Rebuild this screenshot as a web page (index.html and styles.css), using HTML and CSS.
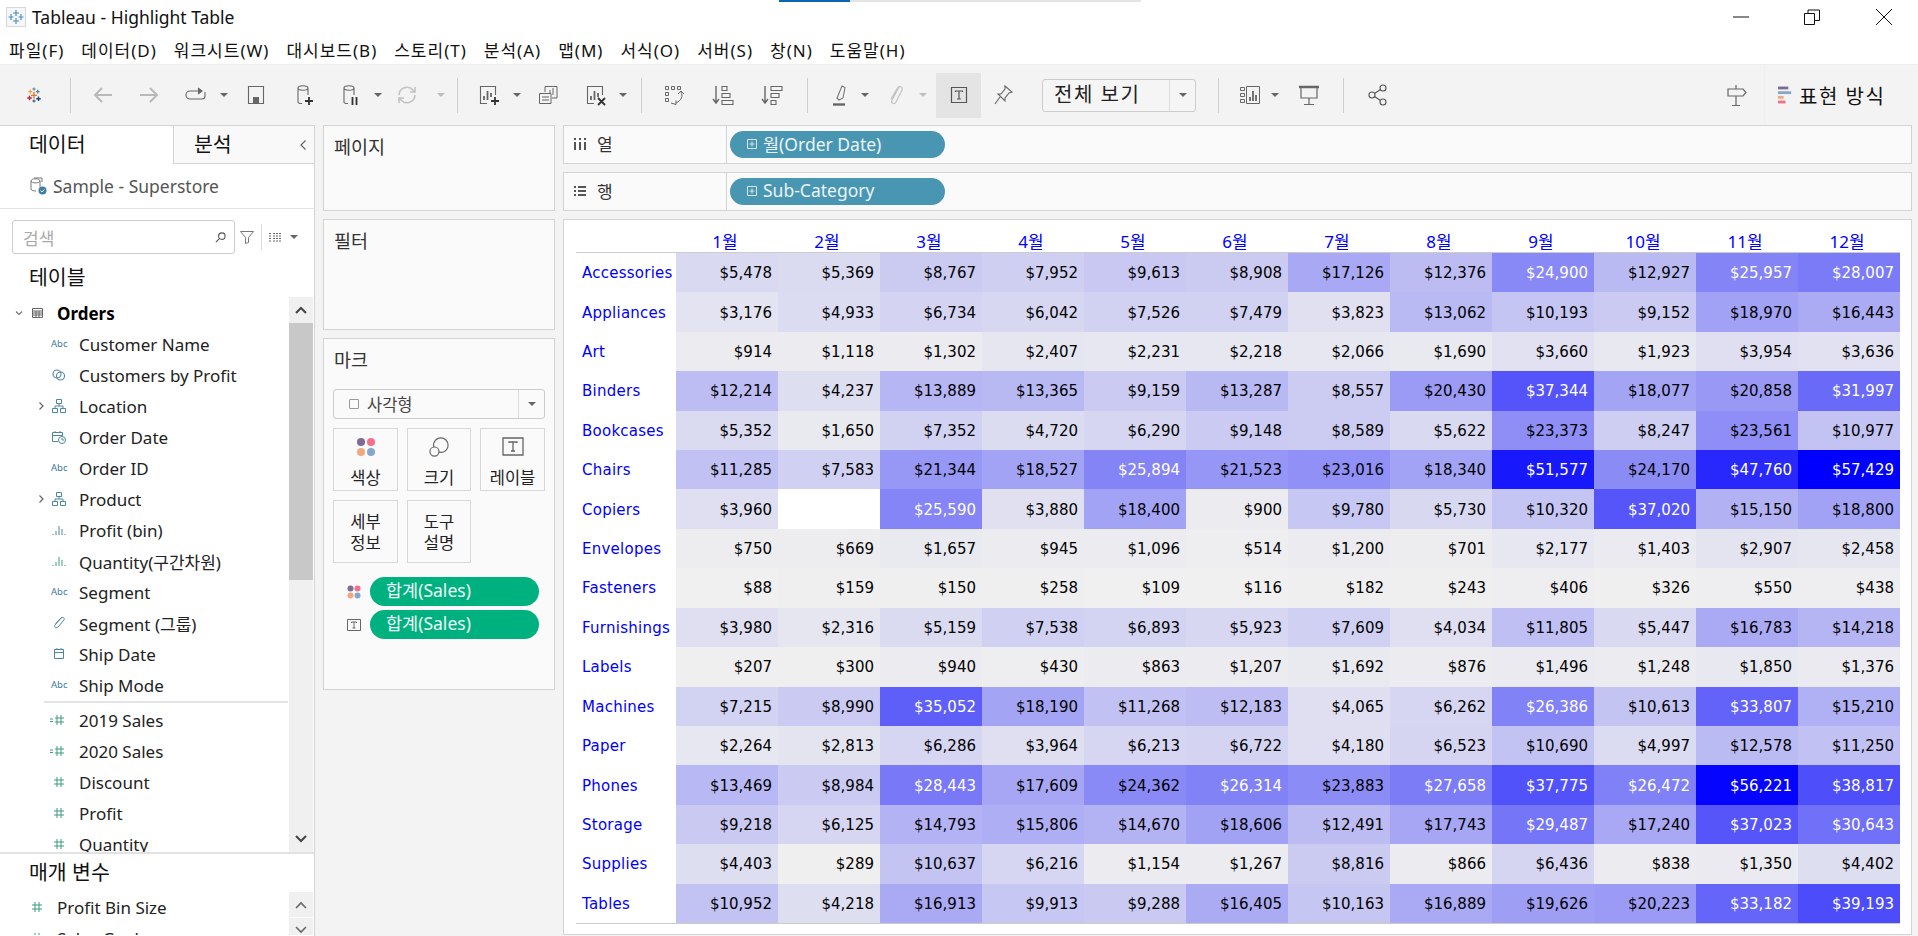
FILE: index.html
```html
<!DOCTYPE html>
<html lang="ko">
<head>
<meta charset="utf-8">
<title>Tableau - Highlight Table</title>
<link rel="stylesheet" href="styles.css">
</head>
<body>
<div class="app">
  <div class="progress"><span class="progress-fill"></span></div>
  <header class="titlebar">
    <svg class="app-icon" viewBox="0 0 20 20"><rect x=".5" y=".5" width="19" height="19" fill="#f4f7fa" stroke="#d8d8d8"/><path d="M10 3v6M7 6h6M10 11v6M7 14h6M5 7v6M2.500 10h5M15 7v6M12.500 10h5" stroke="#4d8fc0" stroke-width="1.200" fill="none"/></svg>
    <span class="app-title">Tableau - Highlight Table</span>
    <div class="window-controls">
      <svg class="win-min" viewBox="0 0 16 16"><path d="M0 8h16" stroke="#111" fill="none"/></svg>
      <svg class="win-max" viewBox="0 0 16 16"><path d="M.5 4.500h10v11H.5zM4 4.500V1h11.500v10.500H11" stroke="#111" fill="none"/></svg>
      <svg class="win-close" viewBox="0 0 16 16"><path d="M0 0l16 16M16 0L0 16" stroke="#111" fill="none"/></svg>
    </div>
  </header>
  <nav class="menubar">
    <span>파일(F)</span><span>데이터(D)</span><span>워크시트(W)</span><span>대시보드(B)</span><span>스토리(T)</span><span>분석(A)</span><span>맵(M)</span><span>서식(O)</span><span>서버(S)</span><span>창(N)</span><span>도움말(H)</span>
  </nav>
  <div class="toolbar">
    <svg class="ti ti-logo ml25" viewBox="0 0 24 24" fill="none" stroke-width="1.800"><path d="M12 8v9M8 12.500h8" stroke="#e8762b"/><path d="M6 13v6M3 16h6" stroke="#c72035"/><path d="M18 14v6M15 17h6" stroke="#1f447e"/><path d="M7 5v5M4.500 7.500h5" stroke="#f0a03c"/><path d="M17 5v5M14.500 7.500h5" stroke="#5b879b"/><path d="M12 2v4M10 4h4" stroke="#7099a6"/><path d="M12 18v4M10 20h4" stroke="#5b6591"/></svg>
    <i class="sep ml27"></i>
    <svg class="ti ml20" viewBox="0 0 24 24" fill="none" stroke="#b9b9b9" stroke-width="2"><path d="M21 12H4M11 5l-7 7 7 7"/></svg>
    <svg class="ti ml22" viewBox="0 0 24 24" fill="none" stroke="#b9b9b9" stroke-width="2"><path d="M3 12h17M13 5l7 7-7 7"/></svg>
    <svg class="ti ml23" viewBox="0 0 24 24" fill="none" stroke="#666" stroke-width="1.100"><path d="M14 8H6a3.500 3.500 0 0 0 0 8h12a3 3 0 0 0 3-3V9"/><path d="M14 5l4 3-4 3" fill="#666"/></svg>
    <i class="caret ml12"></i>
    <svg class="ti ml15" viewBox="0 0 24 24" fill="none" stroke="#666" stroke-width="1.100"><path d="M4.500 3.500h15v17h-15z"/><rect x="9" y="14" width="6" height="6" fill="#666" stroke="none"/></svg>
    <svg class="ti ml24" viewBox="0 0 24 24" fill="none" stroke="#666" stroke-width="1.100"><path d="M6 5c0-3 10-3 10 0v7M6 5c0 3 10 3 10 0M6 5v14c0 1 2 1.500 4 1.500"/><path d="M17 14v8M13 18h8" stroke="#333" stroke-width="1.800"/></svg>
    <svg class="ti ml22" viewBox="0 0 24 24" fill="none" stroke="#666" stroke-width="1.100"><path d="M6 5c0-3 10-3 10 0v7M6 5c0 3 10 3 10 0M6 5v14c0 1 2 1.500 4 1.500"/><path d="M14.500 14v8M18.500 14v8" stroke="#333" stroke-width="1.800"/></svg>
    <i class="caret ml12"></i>
    <svg class="ti ml12" viewBox="0 0 24 24" fill="none" stroke="#c2c2c2" stroke-width="1.600"><path d="M4 12a8 8 0 0 1 14-5l2 2M20 12a8 8 0 0 1-14 5l-2-2"/><path d="M20 4v5h-5M4 20v-5h5"/></svg>
    <i class="caret caret-off ml18"></i>
    <i class="sep ml11"></i>
    <svg class="ti ml19" viewBox="0 0 24 24" fill="none" stroke="#666" stroke-width="1.100"><path d="M10 20.500H3.500v-17h15V12"/><path d="M7 17v-4M10.500 17V8M14 14V10" stroke-width="1.800"/><path d="M18 14v8M14 18h8" stroke="#333" stroke-width="1.800"/></svg>
    <i class="caret ml12"></i>
    <svg class="ti ml14" viewBox="0 0 24 24" fill="none" stroke="#666" stroke-width="1"><path d="M9 9V3.500h12V15h-5"/><path d="M3.500 10.500H15v10H3.500z" fill="#f3f3f3"/><path d="M14 11V7M17 12V5M6 17h7M6 14h7"/></svg>
    <svg class="ti ml24" viewBox="0 0 24 24" fill="none" stroke="#666" stroke-width="1.100"><path d="M10 20.500H3.500v-17h15V12"/><path d="M7 17v-4M10.500 17V8M14 14V10" stroke-width="1.800"/><path d="M14 15l7 7M21 15l-7 7" stroke="#333" stroke-width="1.800"/></svg>
    <i class="caret ml11"></i>
    <i class="sep ml13"></i>
    <svg class="ti ml20" viewBox="0 0 24 24" fill="none" stroke="#666" stroke-width="1"><path d="M3.500 3.500h3v3h-3zM9.500 3.500h3v3h-3zM15.500 3.500h3v3h-3zM3.500 9.500h3v3h-3zM3.500 15.500h3v3h-3z"/><path d="M19 9c2 4 1 8-5 11M9 20l5 1.500 0-4M16 11l3-3 3 3"/></svg>
    <svg class="ti ml25" viewBox="0 0 24 24" fill="none" stroke="#666" stroke-width="1.100"><path d="M5 3v17M2 16l3 4 3-4" stroke-width="1.400"/><path d="M11 3.500h5v4h-5zM11 10.500h8v4h-8zM11 17.500h11v4H11z"/></svg>
    <svg class="ti ml25" viewBox="0 0 24 24" fill="none" stroke="#666" stroke-width="1.100"><path d="M5 3v17M2 16l3 4 3-4" stroke-width="1.400"/><path d="M11 3.500h11v4H11zM11 10.500h8v4h-8zM11 17.500h5v4h-5z"/></svg>
    <i class="sep ml23"></i>
    <svg class="ti ml20" viewBox="0 0 24 24" fill="none" stroke="#777" stroke-width="1.100"><path d="M9 15L14 3l3 1.500-2 10.500-4 2z"/><path d="M5 21.500h12" stroke="#666" stroke-width="2.400"/></svg>
    <i class="caret ml9"></i>
    <svg class="ti ml13" viewBox="0 0 24 24" fill="none" stroke="#c4c4c4" stroke-width="1.300"><path d="M16 4L9 17c-1.500 3 2.500 5 4 2l6-12c1-3-3-5-4.500-2L8 16"/></svg>
    <i class="caret caret-off ml12"></i>
    <div class="tool-active ml8"><svg class="ti" viewBox="0 0 24 24" fill="none" stroke="#555" stroke-width="1.200"><path d="M4.500 4.500h15v15h-15z"/><path d="M8.500 9V8h7v1M12 8v8M10 16h4"/></svg></div>
    <svg class="ti ml10" viewBox="0 0 24 24" fill="none" stroke="#666" stroke-width="1.100"><path d="M14 3l7 6-3 1-4 5 0 3-7-7 3 0 4-5zM9 14l-5 7"/></svg>
    <div class="fit-select ml27"><span class="fit-text">전체 보기</span><span class="fit-btn"><i class="caret"></i></span></div>
    <i class="sep ml22"></i>
    <svg class="ti ml19" viewBox="0 0 24 24" fill="none" stroke="#666" stroke-width="1"><path d="M2.500 4.500h4v3h-4zM2.500 10.500h4v3h-4zM2.500 16.500h4v3h-4zM8.500 3.500h13v17h-13z"/><path d="M12 18v-4M15 18V8M18 18v-6" stroke-width="1.800"/></svg>
    <i class="caret ml9"></i>
    <svg class="ti ml17" viewBox="0 0 24 24" fill="none" stroke="#666" stroke-width="1.200"><path d="M2 4h20" stroke-width="2.500"/><path d="M4 5v10h16V5M12 15v6M7 21.500h10"/></svg>
    <i class="sep ml22"></i>
    <svg class="ti ml22" viewBox="0 0 24 24" fill="none" stroke="#555" stroke-width="1.100"><circle cx="6" cy="12" r="3"/><circle cx="17" cy="5" r="3"/><circle cx="17" cy="19" r="3"/><path d="M8.500 10.500l6-4M8.500 13.500l6 4"/></svg>
    <svg class="ti ml-auto" viewBox="0 0 24 24" fill="none" stroke="#666" stroke-width="1.200"><path d="M3 6h15l3 3.500L18 13H3zM11 2v4M11 13v10M7 22.500h8"/></svg>
    <div class="showme">
      <svg class="showme-icon" viewBox="0 0 16 18"><rect y="0" width="11" height="3" fill="#7f6a94"/><rect y="5" width="14" height="3" fill="#86a7cd"/><rect y="10" width="6" height="3" fill="#f4a77e"/><rect y="15" width="8" height="3" fill="#f4708a"/></svg>
      <span>표현 방식</span>
    </div>
  </div>
  <main class="workspace">
    <aside class="data-pane">
      <div class="tabs">
        <div class="tab tab-on">데이터</div>
        <div class="tab tab-off">분석<svg class="tab-chev" viewBox="0 0 8 12" fill="none" stroke="#666" stroke-width="1.200"><path d="M6.500 1.500L2 6l4.500 4.500"/></svg></div>
      </div>
      <div class="source">
        <svg class="source-icon" viewBox="0 0 18 18" fill="none" stroke="#777"><path d="M2 4c0-3 9-3 9 0v6M2 4c0 2.500 9 2.500 9 0M2 4v8c0 1.500 3 2 5 2M5 1h8v4"/><circle cx="13.500" cy="13.500" r="4" fill="#3b7ea8" stroke="none"/><path d="M11.500 13.500l1.500 1.500 2.500-2.500" stroke="#fff"/></svg>
        <span>Sample - Superstore</span>
      </div>
      <div class="search-row">
        <div class="search"><span class="search-ph">검색</span>
          <svg class="search-mag" viewBox="0 0 12 12" fill="none" stroke="#555" stroke-width="1.200"><circle cx="7.500" cy="4.500" r="3.500"/><path d="M5 7L1 11"/></svg>
        </div>
        <svg class="funnel" viewBox="0 0 14 14" fill="none" stroke="#777"><path d="M.5 1.500h13L8.500 7.500v5l-3 1v-6z"/></svg>
        <i class="sep sep-short"></i>
        <svg class="listview" viewBox="0 0 13 10" fill="none" stroke="#666"><path d="M0 1.500h3M4 1.500h9M0 4h3M4 4h9M0 6.500h3M4 6.500h9M0 9h3M4 9h9" stroke-dasharray="2 1"/></svg>
        <i class="caret ml8"></i>
      </div>
      <div class="section-head">테이블</div>
      <div class="fields-wrap">
        <div class="fields">
          <div class="row row-table">
            <svg class="row-chev" viewBox="0 0 10 10" fill="none" stroke="#777" stroke-width="1.200"><path d="M2 3.500l3 3 3-3"/></svg>
            <svg class="row-tbl" viewBox="0 0 11 10" fill="none" stroke="#666"><path d="M.5.500h10v9H.5zM.5 3h10M.5 5h10M.5 7h10M4 3v6.500M7 3v6.500"/></svg>
            <b>Orders</b>
          </div>
          <div class="row"><span class="fi abc">Abc</span>Customer Name</div>
          <div class="row"><svg class="fi" viewBox="0 0 14 14" fill="none" stroke="#4d86a0" stroke-width="1.100"><circle cx="5" cy="6" r="4"/><circle cx="8.500" cy="8" r="4"/></svg>Customers by Profit</div>
          <div class="row"><svg class="exp" viewBox="0 0 6 10" fill="none" stroke="#666" stroke-width="1.200"><path d="M1.500 1.500L5 5 1.500 8.500"/></svg><svg class="fi" viewBox="0 0 14 14" fill="none" stroke="#4d86a0"><path d="M4.500.500h5v4h-5zM.500 9.500h5v4h-5zM8.500 9.500h5v4h-5zM7 4.500V7H3v2.500M7 7h4v2.500"/></svg>Location</div>
          <div class="row"><svg class="fi" viewBox="0 0 14 14" fill="none" stroke="#4d86a0"><path d="M6 11.500H.5v-9h10V6M.5 5.500h10M3 1v2M8 1v2"/><circle cx="10" cy="10" r="3.500"/><path d="M10 8v2h2"/></svg>Order Date</div>
          <div class="row"><span class="fi abc">Abc</span>Order ID</div>
          <div class="row"><svg class="exp" viewBox="0 0 6 10" fill="none" stroke="#666" stroke-width="1.200"><path d="M1.500 1.500L5 5 1.500 8.500"/></svg><svg class="fi" viewBox="0 0 14 14" fill="none" stroke="#4d86a0"><path d="M4.500.500h5v4h-5zM.500 9.500h5v4h-5zM8.500 9.500h5v4h-5zM7 4.500V7H3v2.500M7 7h4v2.500"/></svg>Product</div>
          <div class="row"><svg class="fi" viewBox="0 0 14 14" fill="none" stroke="#4d86a0"><path d="M1 12v-1M4 12V8M7 12V3M10 12V6M13 12v-1"/></svg>Profit (bin)</div>
          <div class="row"><svg class="fi" viewBox="0 0 14 14" fill="none" stroke="#3b9c80"><path d="M1 12v-1M4 12V8M7 12V3M10 12V6M13 12v-1"/></svg>Quantity(구간차원)</div>
          <div class="row"><span class="fi abc">Abc</span>Segment</div>
          <div class="row"><svg class="fi" viewBox="0 0 14 14" fill="none" stroke="#4d86a0"><path d="M10 1L3 9c-1.500 2 1 4 3 2l6-7c1-2-1-3.500-3-2L3.500 8"/></svg>Segment (그룹)</div>
          <div class="row"><svg class="fi" viewBox="0 0 14 14" fill="none" stroke="#4d86a0"><path d="M2.500 2.500h9v9h-9zM2.500 5.500h9M5 1v2M9 1v2"/></svg>Ship Date</div>
          <div class="row"><span class="fi abc">Abc</span>Ship Mode</div>
          <div class="divider"></div>
          <div class="row"><svg class="fi fi-wide" viewBox="0 0 16 14" fill="none" stroke="#3b9c80"><path d="M0 6h3M0 8.500h3M7 2v10M11 2v10M5 5h9M5 9h9"/></svg>2019 Sales</div>
          <div class="row"><svg class="fi fi-wide" viewBox="0 0 16 14" fill="none" stroke="#3b9c80"><path d="M0 6h3M0 8.500h3M7 2v10M11 2v10M5 5h9M5 9h9"/></svg>2020 Sales</div>
          <div class="row"><svg class="fi" viewBox="0 0 14 14" fill="none" stroke="#3b9c80"><path d="M5 2v10M9 2v10M2 5h10M2 9h10"/></svg>Discount</div>
          <div class="row"><svg class="fi" viewBox="0 0 14 14" fill="none" stroke="#3b9c80"><path d="M5 2v10M9 2v10M2 5h10M2 9h10"/></svg>Profit</div>
          <div class="row"><svg class="fi" viewBox="0 0 14 14" fill="none" stroke="#3b9c80"><path d="M5 2v10M9 2v10M2 5h10M2 9h10"/></svg>Quantity</div>
        </div>
        <div class="scrollbar">
          <div class="sb-btn"><svg viewBox="0 0 12 8" fill="none" stroke="#444" stroke-width="2"><path d="M1 7l5-5 5 5"/></svg></div>
          <div class="sb-thumb"></div>
          <div class="sb-track"></div>
          <div class="sb-btn sb-down"><svg viewBox="0 0 12 8" fill="none" stroke="#444" stroke-width="2"><path d="M1 1l5 5 5-5"/></svg></div>
        </div>
      </div>
      <div class="params">
        <div class="section-head param-head">매개 변수</div>
        <div class="params-body">
          <div class="params-list">
            <div class="row row-param"><svg class="fi" viewBox="0 0 14 14" fill="none" stroke="#3b9c80"><path d="M5 2v10M9 2v10M2 5h10M2 9h10"/></svg>Profit Bin Size</div>
            <div class="row row-param"><svg class="fi" viewBox="0 0 14 14" fill="none" stroke="#3b9c80"><path d="M5 2v10M9 2v10M2 5h10M2 9h10"/></svg>Sales Goal</div>
          </div>
          <div class="scrollbar sb-small">
            <div class="sb-btn"><svg viewBox="0 0 12 8" fill="none" stroke="#666" stroke-width="1.600"><path d="M1 7l5-5 5 5"/></svg></div>
            <div class="sb-btn sb-sep"><svg viewBox="0 0 12 8" fill="none" stroke="#666" stroke-width="1.600"><path d="M1 1l5 5 5-5"/></svg></div>
          </div>
        </div>
      </div>
    </aside>
    <section class="cards">
      <div class="card card-pages"><div class="card-title">페이지</div></div>
      <div class="card card-filters"><div class="card-title">필터</div></div>
      <div class="card card-marks">
        <div class="card-title">마크</div>
        <div class="mark-select"><span class="mark-sel-label"><i class="square"></i>사각형</span><span class="mark-sel-btn"><i class="caret"></i></span></div>
        <div class="mark-grid">
          <div class="mark-btn">
            <svg class="mark-ic" viewBox="0 0 20 20"><circle cx="5" cy="5" r="4" fill="#7f6a94"/><circle cx="15" cy="5" r="4" fill="#f4708a"/><circle cx="5" cy="15" r="4" fill="#f4a77e"/><circle cx="15" cy="15" r="4" fill="#86a7cd"/></svg>
            <span>색상</span></div>
          <div class="mark-btn">
            <svg class="mark-ic" viewBox="0 0 22 22" fill="none" stroke="#666" stroke-width="1.300"><circle cx="13" cy="9" r="8"/><circle cx="6" cy="16" r="5" fill="#fafafa"/></svg>
            <span>크기</span></div>
          <div class="mark-btn">
            <svg class="mark-ic" viewBox="0 0 22 20" fill="none" stroke="#666" stroke-width="1.300"><path d="M1 1h20v17H1z"/><path d="M7 6V5h8v1M11 5v9M9 14h4"/></svg>
            <span>레이블</span></div>
          <div class="mark-btn mark-two"><span>세부<br>정보</span></div>
          <div class="mark-btn mark-two"><span>도구<br>설명</span></div>
        </div>
        <div class="mark-pills">
          <div class="mark-pill-row">
            <svg class="pill-ic" viewBox="0 0 14 14"><circle cx="3.500" cy="3.500" r="3" fill="#7f6a94"/><circle cx="10.500" cy="3.500" r="3" fill="#f4708a"/><circle cx="3.500" cy="10.500" r="3" fill="#f4a77e"/><circle cx="10.500" cy="10.500" r="3" fill="#86a7cd"/></svg>
            <div class="pill-green">합계(Sales)</div>
          </div>
          <div class="mark-pill-row">
            <svg class="pill-ic" viewBox="0 0 14 14" fill="none" stroke="#666"><path d="M.5 1.500h13v11H.5z"/><path d="M4.500 5V4h5v1M7 4v6M5.500 10h3"/></svg>
            <div class="pill-green">합계(Sales)</div>
          </div>
        </div>
      </div>
    </section>
    <section class="viewarea">
      <div class="shelf">
        <div class="shelf-label"><svg class="shelf-ic" viewBox="0 0 12 12" fill="#555"><path d="M0 4h2v8H0zM5 4h2v8H5zM10 4h2v8h-2zM0 0h2v2H0zM5 0h2v2H5zM10 0h2v2h-2z"/></svg>열</div>
        <div class="shelf-body"><div class="pill-blue"><svg class="pill-plus" viewBox="0 0 10 10" fill="none" stroke="#d5e6ee"><path d="M.5.500h9v9h-9zM5 2.500v5M2.500 5h5"/></svg>월(Order Date)</div></div>
      </div>
      <div class="shelf">
        <div class="shelf-label"><svg class="shelf-ic" viewBox="0 0 12 12" fill="#555"><path d="M0 1h2v2H0zM4 1h8v2H4zM0 5h2v2H0zM4 5h8v2H4zM0 9h2v2H0zM4 9h8v2H4z"/></svg>행</div>
        <div class="shelf-body"><div class="pill-blue"><svg class="pill-plus" viewBox="0 0 10 10" fill="none" stroke="#d5e6ee"><path d="M.5.500h9v9h-9zM5 2.500v5M2.500 5h5"/></svg>Sub-Category</div></div>
      </div>
      <div class="viz">
        <div class="heat" id="heat"></div>
      </div>
    </section>
  </main>
</div>
<script src="script.js"></script>
</body>
</html>
```
FILE: styles.css
```css
* { box-sizing: border-box; }
html, body { margin: 0; height: 100%; overflow: hidden; background: #fff; }
body { font-family: "Noto Sans", "Noto Sans CJK KR", sans-serif; color: #222; }
i { display: block; }
.app { width: 1918px; height: 936px; display: flex; flex-direction: column; position: relative; }
.progress { position: absolute; left: 779px; top: 0; width: 362px; height: 2px; background: #e4e4e4; }
.progress-fill { display: block; width: 71px; height: 2px; background: #0a66b0; }

.titlebar { height: 34px; display: flex; align-items: center; padding-left: 6px; background: #fff; flex: none; }
.app-icon { width: 20px; height: 20px; margin-right: 6px; }
.app-title { font-size: 17.500px; color: #111; }
.window-controls { margin-left: auto; display: flex; align-items: center; padding-right: 26px; }
.window-controls svg { width: 16px; height: 16px; display: block; }
.win-max { margin-left: 55px; }
.win-close { margin-left: 56px; }

.menubar { height: 30px; display: flex; align-items: center; gap: 17px; padding-left: 9px; font-size: 17px; letter-spacing: 1px; color: #111; flex: none; background: #fff; }

.toolbar { height: 61px; background: #f3f3f3; display: flex; align-items: center; flex: none; border-top: 1px solid #eee; }
.ti { width: 24px; height: 24px; flex: none; display: block; }
.ti-logo { width: 18px; height: 18px; }
.sep { width: 1px; height: 35px; background: #cfcfcf; flex: none; }
.caret { width: 0; height: 0; border: 4px solid transparent; border-top: 4px solid #666; border-bottom: 0; flex: none; margin-left: 1px; margin-right: 1px; }
.caret-off { border-top-color: #bdbdbd; }
.ml8 { margin-left: 8px; } .ml9 { margin-left: 9px; } .ml10 { margin-left: 10px; } .ml11 { margin-left: 11px; }
.ml12 { margin-left: 12px; } .ml13 { margin-left: 13px; } .ml14 { margin-left: 14px; } .ml15 { margin-left: 15px; }
.ml17 { margin-left: 17px; } .ml18 { margin-left: 18px; } .ml19 { margin-left: 19px; } .ml20 { margin-left: 20px; }
.ml22 { margin-left: 22px; } .ml23 { margin-left: 23px; } .ml24 { margin-left: 24px; } .ml25 { margin-left: 25px; }
.ml27 { margin-left: 27px; } .ml-auto { margin-left: auto; }
.tool-active { width: 45px; height: 45px; background: #e4e4e4; display: flex; align-items: center; justify-content: center; flex: none; }
.fit-select { width: 154px; height: 33px; border: 1px solid #ccc; border-radius: 3px; display: flex; align-items: stretch; flex: none; background: #f5f5f5; }
.fit-text { flex: 1; font-size: 20px; letter-spacing: 1.500px; line-height: 30px; padding-left: 11px; color: #222; white-space: nowrap; }
.fit-btn { width: 26px; flex: none; border-left: 1px solid #ddd; display: flex; align-items: center; justify-content: center; }
.showme { width: 154px; align-self: stretch; margin-left: 15px; display: flex; align-items: center; padding-left: 13px; border-left: 1px solid #efefef; font-size: 20px; letter-spacing: 1.500px; color: #111; }
.showme-icon { width: 15px; height: 18px; margin-right: 6px; }

.workspace { flex: 1; min-height: 0; display: grid; grid-template-columns: 315px 232px 1349px; column-gap: 8px; background: #f3f3f3; padding-bottom: 1px; }
.data-pane { background: #fff; border-top: 1px solid #d4d4d4; border-right: 1px solid #d4d4d4; display: flex; flex-direction: column; min-height: 0; overflow: hidden; height: 811px; }
.tabs { display: flex; height: 38px; flex: none; }
.tab { font-size: 20.500px; line-height: 37px; color: #111; }
.tab-on { width: 173px; padding-left: 29px; }
.tab-off { flex: 1; padding-left: 20px; background: #f9f9f9; border-left: 1px solid #d4d4d4; border-bottom: 1px solid #d4d4d4; display: flex; align-items: center; }
.tab-chev { width: 8px; height: 12px; margin-left: auto; margin-right: 7px; }
.source { height: 45px; display: flex; align-items: center; padding-left: 29px; font-size: 17.500px; color: #555; border-bottom: 1px solid #e2e2e2; flex: none; }
.source-icon { width: 18px; height: 18px; margin-right: 6px; }
.search-row { height: 46px; display: flex; align-items: center; padding-left: 12px; padding-top: 10px; flex: none; }
.search { width: 223px; height: 34px; border: 1px solid #ccc; border-radius: 3px; display: flex; align-items: center; padding: 0 8px 0 10px; }
.search-ph { font-size: 17px; color: #aaa; }
.search-mag { width: 11px; height: 11px; margin-left: auto; }
.funnel { width: 14px; height: 14px; margin-left: 5px; }
.sep-short { height: 26px; margin-left: 7px; background: #ddd; }
.listview { width: 13px; height: 10px; margin-left: 7px; }
.section-head { font-size: 20.500px; line-height: 26px; padding-left: 29px; color: #111; height: 42px; padding-top: 9px; flex: none; }

.fields-wrap { height: 555px; display: flex; flex: none; overflow: hidden; }
.fields { width: 289px; padding-top: 1px; overflow: hidden; }
.row { height: 31px; display: flex; align-items: center; padding-left: 79px; font-size: 17px; color: #222; position: relative; white-space: nowrap; }
.row-table { padding-left: 57px; color: #000; }
.row-chev { position: absolute; left: 14px; top: 10px; width: 10px; height: 10px; }
.row-tbl { position: absolute; left: 32px; top: 10px; width: 11px; height: 10px; }
.fi { position: absolute; left: 52px; top: 8px; width: 14px; height: 14px; }
.fi-wide { left: 50px; width: 16px; }
.exp { position: absolute; left: 38px; top: 10px; width: 6px; height: 10px; }
.abc { font-size: 9.500px; line-height: 14px; color: #3c7a9b; left: 51px; width: auto; }
.divider { height: 2px; margin: 0 1px 2px 44px; background: #e4e4e4; }
.scrollbar { width: 24px; display: flex; flex-direction: column; background: #f0f0f0; flex: none; }
.sb-btn { height: 26px; display: flex; align-items: center; justify-content: center; flex: none; background: #f0f0f0; }
.sb-btn svg { width: 12px; height: 8px; display: block; }
.sb-thumb { height: 257px; background: #c8c8c8; flex: none; }
.sb-track { flex: 1; }
.params { flex: 1; min-height: 0; border-top: 2px solid #e2e2e2; overflow: hidden; }
.param-head { height: 38px; padding-top: 5px; }
.params-body { display: flex; height: 43px; overflow: hidden; }
.params-list { width: 289px; }
.row-param { padding-left: 57px; height: 31px; }
.row-param .fi { left: 30px; }
.sb-small { height: 43px; }
.sb-sep { border-top: 1px solid #fff; height: 18px; align-items: flex-start; padding-top: 8px; }
.sb-small .sb-btn:first-child { height: 25px; }

.cards { display: flex; flex-direction: column; gap: 8px; }
.card { background: #fafafa; border: 1px solid #d4d4d4; flex: none; }
.card-pages { height: 86px; }
.card-filters { height: 111px; }
.card-marks { height: 352px; }
.card-title { font-size: 18.500px; color: #333; padding: 10px 0 0 10px; line-height: 22px; }
.mark-select { margin: 18px 9px 0; height: 30px; border: 1px solid #ccc; border-radius: 3px; display: flex; align-items: stretch; }
.mark-sel-label { flex: 1; display: flex; align-items: center; padding-left: 15px; font-size: 16.500px; color: #444; }
.square { width: 10px; height: 10px; border: 1px solid #999; border-radius: 1px; margin-right: 8px; background: #fafafa; }
.mark-sel-btn { width: 26px; border-left: 1px solid #ddd; display: flex; align-items: center; justify-content: center; }
.mark-grid { display: grid; grid-template-columns: 65px 64px 65px; grid-auto-rows: 63px; column-gap: 9px; row-gap: 9px; margin: 9px 9px 0; }
.mark-btn { border: 1px solid #d8d8d8; display: flex; flex-direction: column; align-items: center; font-size: 16.500px; color: #222; padding-top: 8px; gap: 8px; }
.mark-ic { width: 22px; height: 20px; display: block; }
.mark-two { justify-content: center; padding: 0; text-align: center; line-height: 21px; }
.mark-pills { margin-top: 14px; display: flex; flex-direction: column; gap: 4px; }
.mark-pill-row { display: flex; align-items: center; padding-left: 23px; height: 29px; }
.pill-ic { width: 14px; height: 14px; margin-right: 9px; flex: none; }
.pill-green { width: 169px; height: 29px; border-radius: 15px; background: #00b180; color: #eefaf6; font-size: 17.500px; line-height: 26px; padding-left: 16px; }

.viewarea { display: flex; flex-direction: column; gap: 8px; min-height: 0; height: 810px; }
.shelf { height: 39px; flex: none; background: #fafafa; border: 1px solid #d4d4d4; display: flex; align-items: stretch; }
.shelf-label { width: 163px; display: flex; align-items: center; padding-left: 10px; padding-bottom: 2px; font-size: 17px; color: #333; border-right: 1px solid #d4d4d4; }
.shelf-ic { width: 12px; height: 12px; margin-right: 11px; }
.shelf-body { flex: 1; display: flex; align-items: center; padding-left: 3px; padding-bottom: 1px; }
.pill-blue { width: 215px; height: 27px; border-radius: 14px; background: #4996b2; color: #eaf4f8; font-size: 17.500px; display: flex; align-items: center; padding-left: 17px; padding-bottom: 2px; }
.pill-plus { width: 10px; height: 10px; margin-right: 6px; margin-top: 2px; flex: none; }

.viz { flex: 1; min-height: 0; background: #fff; border: 1px solid #d4d4d4; padding: 0 0 10px 12px; }
.heat { width: 1324px; height: 100%; display: grid; grid-template-columns: 100px repeat(12, 102px); grid-template-rows: 33px repeat(17, 1fr); border-bottom: 1px solid #ccc; font-family: "DejaVu Sans", "Noto Sans CJK KR", sans-serif; font-size: 15px; }
.hcell { color: #0000ff; text-align: center; padding-top: 11px; padding-right: 4px; line-height: 22px; font-family: "Noto Sans", "Noto Sans CJK KR", sans-serif; font-size: 17px; border-bottom: 1px solid #ccc; }
.hblank { border-bottom: 1px solid #ccc; }
.rlabel { color: #0000ff; display: flex; align-items: center; padding-left: 6px; padding-top: 1px; letter-spacing: .25px; white-space: nowrap; }
.cell { display: flex; align-items: center; justify-content: flex-end; padding-right: 6px; padding-top: 1px; color: #000; }
.cell-light { color: #fff; }
```
FILE: script.js
```js
var months = ["1월","2월","3월","4월","5월","6월","7월","8월","9월","10월","11월","12월"];
var data = [
  ["Accessories",5478,5369,8767,7952,9613,8908,17126,12376,24900,12927,25957,28007],
  ["Appliances",3176,4933,6734,6042,7526,7479,3823,13062,10193,9152,18970,16443],
  ["Art",914,1118,1302,2407,2231,2218,2066,1690,3660,1923,3954,3636],
  ["Binders",12214,4237,13889,13365,9159,13287,8557,20430,37344,18077,20858,31997],
  ["Bookcases",5352,1650,7352,4720,6290,9148,8589,5622,23373,8247,23561,10977],
  ["Chairs",11285,7583,21344,18527,25894,21523,23016,18340,51577,24170,47760,57429],
  ["Copiers",3960,null,25590,3880,18400,900,9780,5730,10320,37020,15150,18800],
  ["Envelopes",750,669,1657,945,1096,514,1200,701,2177,1403,2907,2458],
  ["Fasteners",88,159,150,258,109,116,182,243,406,326,550,438],
  ["Furnishings",3980,2316,5159,7538,6893,5923,7609,4034,11805,5447,16783,14218],
  ["Labels",207,300,940,430,863,1207,1692,876,1496,1248,1850,1376],
  ["Machines",7215,8990,35052,18190,11268,12183,4065,6262,26386,10613,33807,15210],
  ["Paper",2264,2813,6286,3964,6213,6722,4180,6523,10690,4997,12578,11250],
  ["Phones",13469,8984,28443,17609,24362,26314,23883,27658,37775,26472,56221,38817],
  ["Storage",9218,6125,14793,15806,14670,18606,12491,17743,29487,17240,37023,30643],
  ["Supplies",4403,289,10637,6216,1154,1267,8816,866,6436,838,1350,4402],
  ["Tables",10952,4218,16913,9913,9288,16405,10163,16889,19626,20223,33182,39193]
];
var MAX = 57429;
var heat = document.getElementById("heat");
function add(cls, text) {
  var d = document.createElement("div");
  d.className = cls;
  d.textContent = text;
  heat.appendChild(d);
  return d;
}
add("hblank", "");
months.forEach(function (m) { add("hcell", m); });
data.forEach(function (row) {
  add("rlabel", row[0]);
  row.slice(1).forEach(function (v) {
    if (v === null) { add("cell", ""); return; }
    var c = add(v > 24500 ? "cell cell-light" : "cell", "$" + v.toLocaleString("en-US"));
    var t = v / MAX;
    var g = Math.round(240 * (1 - t));
    var b = Math.round(240 + 15 * t);
    c.style.background = "rgb(" + g + "," + g + "," + b + ")";
  });
});
```
